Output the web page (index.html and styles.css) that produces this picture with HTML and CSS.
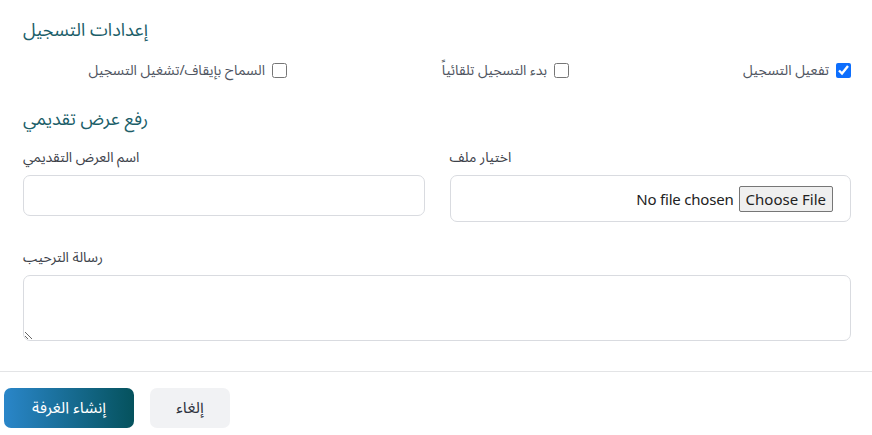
FILE: index.html
```html
<!DOCTYPE html>
<html lang="ar" dir="rtl">
<head>
<meta charset="utf-8">
<link rel="stylesheet" href="styles.css">
</head>
<body>
<div class="modal-body">
  <h5 class="section-title">إعدادات التسجيل</h5>
  <div class="checks">
    <label class="check"><input type="checkbox" checked><span>تفعيل التسجيل</span></label>
    <label class="check"><input type="checkbox"><span>بدء التسجيل تلقائياً</span></label>
    <label class="check"><input type="checkbox"><span>السماح بإيقاف/تشغيل التسجيل</span></label>
  </div>
  <h5 class="section-title second">رفع عرض تقديمي</h5>
  <div class="form-grid">
    <div class="field">
      <label class="field-label">اختيار ملف</label>
      <div class="file-box"><input type="file" class="file-input"></div>
    </div>
    <div class="field">
      <label class="field-label">اسم العرض التقديمي</label>
      <input type="text" class="text-input">
    </div>
    <div class="field full">
      <label class="field-label">رسالة الترحيب</label>
      <textarea class="textarea"></textarea>
    </div>
  </div>
</div>
<div class="modal-footer">
  <button class="btn btn-cancel">إلغاء</button>
  <button class="btn btn-create">إنشاء الغرفة</button>
</div>
</body>
</html>
```

FILE: styles.css
```css
html, body {
  margin: 0;
  padding: 0;
  background: #ffffff;
}
body {
  font-family: "Noto Sans Arabic", "Noto Kufi Arabic", "Noto Sans", "DejaVu Sans", sans-serif;
  color: #3d424a;
}
.modal-body {
  padding: 19px 21px 30px 23px;
}
.section-title {
  margin: 0;
  font-size: 18px;
  line-height: 22px;
  font-weight: 400;
  color: #1b5e69;
  text-align: left;
}
.section-title.second {
  margin-top: 28px;
}
.checks {
  margin-top: 19px;
  display: grid;
  grid-template-columns: repeat(3, 1fr);
  column-gap: 18px;
}
.check {
  display: flex;
  align-items: center;
  gap: 7px;
  height: 20px;
  font-size: 14px;
  color: #4f5561;
}
.check input {
  margin: 0;
  width: 15px;
  height: 15px;
  accent-color: #0d6efd;
}
.form-grid {
  margin-top: 18px;
  display: grid;
  grid-template-columns: 1fr 1fr;
  column-gap: 25px;
  row-gap: 26px;
  align-items: start;
}
.field {
  display: flex;
  flex-direction: column;
}
.field.full {
  grid-column: 1 / -1;
}
.field-label {
  font-size: 14px;
  line-height: 20px;
  color: #3d424a;
  text-align: left;
  margin-bottom: 7px;
}
.text-input,
.file-box,
.textarea {
  box-sizing: border-box;
  border: 1px solid #d9dbe0;
  border-radius: 7px;
  background: #fff;
}
.text-input {
  height: 41px;
  width: 100%;
  margin: 0;
}
.file-box {
  height: 47px;
  padding: 8px 17px;
  display: flex;
  align-items: center;
}
.file-input {
  width: 100%;
  font-family: "Noto Sans", "DejaVu Sans", sans-serif;
  font-size: 15px;
  letter-spacing: -0.2px;
  color: #222;
}
.file-input::file-selector-button {
  font-family: inherit;
  font-size: 15px;
  background: #efefef;
  border: 1px solid #767676;
  border-radius: 2px;
  padding: 2px 6px;
  margin-left: 5px;
  color: #222;
}
.textarea {
  display: block;
  width: 100%;
  height: 66px;
  margin: 0;
}
.modal-footer {
  border-top: 1px solid #e3e4e6;
  padding: 16px 4px;
  display: flex;
  justify-content: flex-end;
  gap: 16px;
}
.btn {
  height: 40px;
  border: 0;
  border-radius: 7px;
  font-family: "Noto Sans Arabic", "Noto Kufi Arabic", "Noto Sans", "DejaVu Sans", sans-serif;
  font-size: 16px;
  font-weight: 400;
}
.btn-cancel {
  width: 80px;
  background: #f1f2f4;
  color: #2f3440;
}
.btn-create {
  width: 130px;
  background: linear-gradient(to right, #2a86c9, #05525d);
  color: #ffffff;
}
```
